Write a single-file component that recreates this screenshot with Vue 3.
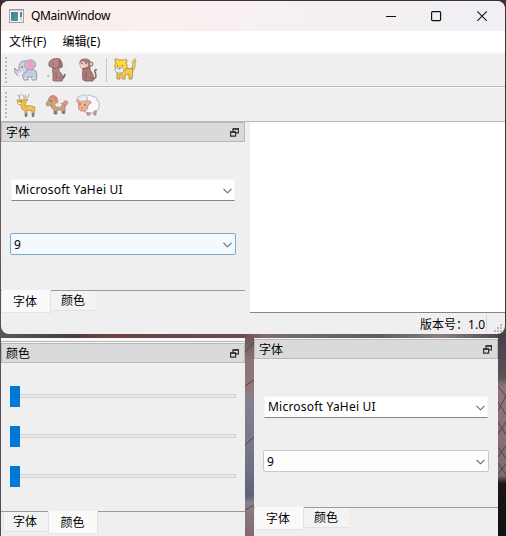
<script setup>
const grip = [0, 1, 2, 3, 4, 5, 6]
</script>

<template>
  <main class="desktop">
    <svg class="wallpaper" viewBox="0 0 506 536" aria-hidden="true">
      <defs>
        <linearGradient id="left" x1="0" y1="0" x2="0" y2="1">
          <stop offset="0" stop-color="#3a2a30" /><stop offset=".2" stop-color="#7b666c" />
          <stop offset=".55" stop-color="#60505a" /><stop offset="1" stop-color="#554650" />
        </linearGradient>
        <linearGradient id="strip" x1="0" x2="1" y1="0" y2="0">
          <stop offset="0" stop-color="#57555f" /><stop offset=".15" stop-color="#4d3c40" />
          <stop offset=".2" stop-color="#6b4141" /><stop offset=".48" stop-color="#70494a" />
          <stop offset=".52" stop-color="#7e6d72" /><stop offset=".75" stop-color="#5f5a62" />
          <stop offset=".87" stop-color="#8c7d82" /><stop offset="1" stop-color="#46434a" />
        </linearGradient>
        <linearGradient id="mid" x1="0" y1="0" x2="0" y2="1">
          <stop offset="0" stop-color="#6f5658" /><stop offset=".12" stop-color="#8d7478" />
          <stop offset=".27" stop-color="#92777b" /><stop offset=".29" stop-color="#85808f" />
          <stop offset=".55" stop-color="#77788a" /><stop offset=".8" stop-color="#606378" />
          <stop offset=".83" stop-color="#897f8a" /><stop offset="1" stop-color="#86686c" />
        </linearGradient>
        <linearGradient id="right" x1="0" y1="0" x2="0" y2="1">
          <stop offset="0" stop-color="#424047" /><stop offset=".22" stop-color="#5d5358" />
          <stop offset=".26" stop-color="#8e777b" /><stop offset=".7" stop-color="#806b70" />
          <stop offset=".74" stop-color="#1b171a" /><stop offset="1" stop-color="#100f11" />
        </linearGradient>
      </defs>
      <rect width="506" height="536" fill="#3a3438" />
      <rect width="2" height="536" fill="url(#left)" />
      <rect y="326" width="506" height="14" fill="url(#strip)" />
      <rect x="245" y="338" width="9" height="198" fill="url(#mid)" />
      <rect x="498" y="334" width="8" height="202" fill="url(#right)" />
      <path d="M245 352l9-10M245 386l9-6M245 445l9-8M245 510l9-5M498 386l8 10-8 15M498 402l8 13M498 434l8-12M498 422l8 13M498 457l8-11M498 447l8 12M498 474l8-10M498 463l8 12" fill="none" stroke="#443439" stroke-opacity=".75" />
    </svg>

    <section class="window">
      <header class="titlebar">
        <svg class="app-icon" width="15" height="14" viewBox="0 0 15 14">
          <defs><linearGradient id="appfill" x1="0" y1="0" x2="1" y2="1"><stop stop-color="#4a73a8" /><stop offset="1" stop-color="#4da883" /></linearGradient></defs>
          <rect x=".5" y=".5" width="14" height="13" fill="#f6f8f8" stroke="#9ba1a5" />
          <path d="M1 1.5h13" stroke="#c1c8cc" />
          <rect x="2" y="3" width="7" height="9" fill="url(#appfill)" />
          <path d="M11 3h2v5h-2z" fill="#617d89" /><path d="M11 8h2v4h-2z" fill="#d1d9dc" />
        </svg>
        <span class="caption">QMainWindow</span>
        <svg class="controls" width="102" height="12" viewBox="0 0 102 12" fill="none" stroke="#111">
          <path d="M0 6.5h10" /><rect x="45.6" y="1.6" width="9" height="9" rx="1" stroke-width="1.15" /><path d="M91.3 1.3l9.5 9.5M100.8 1.3l-9.5 9.5" stroke-width="1.1" />
        </svg>
      </header>

      <nav class="menubar"><span>文件(F)</span><span>编辑(E)</span></nav>

      <div class="toolbar">
        <span class="grip"><i v-for="n in grip" :key="n" /></span>
        <svg class="animal" viewBox="0 0 24 24">
          <g stroke="#9290a8" stroke-width=".9" stroke-linejoin="round">
            <path d="M9 12Q17 9 22 13Q24 17 22 22H18V19H14V22H10L8 16Z" fill="#c8cadd" />
            <path d="M12 3Q6 2 5 8Q6 12 3 13L1 10Q-1 14 3 17Q7 18 8 15Q13 16 14 10Z" fill="#cfd1e1" />
            <path d="M11 6Q12 1 18 2Q23 4 21 9Q18 13 13 11Q10 9 11 6Z" fill="#c8cadd" />
          </g>
          <path d="M13 6Q14 2 18 3Q21 5 20 9Q17 11 14 10Q12 8 13 6Z" fill="#f09dbe" />
          <path d="M4 16.5q4 0 5-3" fill="none" stroke="#fff" stroke-width="1.5" /><circle cx="8" cy="9" r=".8" fill="#57586e" /><path d="M10 20.5h3M18 20.5h3" stroke="#e7e7ef" />
        </svg>
        <svg class="animal" viewBox="0 0 24 24">
          <g stroke="#80656f" stroke-width=".9" stroke-linejoin="round">
            <path d="M15 20Q19 21 20 16" fill="none" stroke-width="1.8" />
            <path d="M8 9Q7 13 8 16V21Q7 23 10 23H17Q20 19 14 13V9Z" fill="#b7827b" />
            <path d="M6 2Q10-1 15 1Q17 4 17 8Q16 11 14 9Q11 12 6 9L4 8Q3 4 6 2Z" fill="#b9857e" />
            <path d="M14 2Q18 4 17 9Q15 11 14 8Z" fill="#a47172" /><path d="M11 14v7M14 20h3" fill="none" />
          </g>
          <circle cx="8" cy="6" r=".7" fill="#584850" /><circle cx="3.2" cy="18" r="1" fill="#77cf94" /><circle cx="21" cy="6" r="1" fill="#f2dda9" /><circle cx="19" cy="12" r=".9" fill="#d8dce9" />
        </svg>
        <svg class="animal" viewBox="0 0 24 24">
          <path d="M16 21Q22 21 19 14Q18 11 21 12" fill="none" stroke="#8c6666" stroke-width="1.6" />
          <g stroke="#80636c" stroke-width=".9">
            <path d="M7 10Q6 17 7 22L10 23H17Q19 18 14 12V9Z" fill="#ac7a74" />
            <path d="M4 6Q3 1 9 1Q15 1 15 7Q14 11 9 11Q4 11 4 6Z" fill="#ac7a74" />
            <circle cx="15" cy="6" r="2" fill="#f0c2b5" />
            <path d="M5 4Q8 2 9 5Q13 4 12 8Q9 11 5 9Q2 8 5 4Z" fill="#f0cbbd" stroke="none" />
            <path d="M10 14v7M14 20h3" fill="none" />
          </g><circle cx="6" cy="5.5" r=".7" fill="#4e4354" /><circle cx="10" cy="5.5" r=".7" fill="#4e4354" /><ellipse cx="6.3" cy="9" rx="1.3" ry=".8" fill="#fff" />
        </svg>
        <span class="separator" />
        <svg class="animal" viewBox="0 0 24 24">
          <path d="M18 12Q21 11 21 7Q20 3 23 2" fill="none" stroke="#a38b5a" stroke-width="3" />
          <path d="M18 12Q21 11 21 7Q20 3 23 2" fill="none" stroke="#f6d44e" stroke-width="1.7" />
          <g stroke="#ae8b51" stroke-width=".9" stroke-linejoin="round">
            <path d="M6 11Q13 9 20 11L19 21H16V16L12 17V21H9V17L7 16V21H4V14Z" fill="#f7cc43" />
            <path d="M2 3Q1 0 4 1L6 2H11Q14 0 14 3L13 5Q16 10 11 13H4Q0 9 3 5Z" fill="#ffda38" />
          </g><ellipse cx="6.5" cy="12" rx="4.5" ry="3" fill="#e6eaf3" stroke="#9293a4" stroke-width=".7" /><path d="M5 10h3l-1.5 1.5z" fill="#ae6774" /><path d="M4 7.5h1M9 7.5h1" stroke="#70563e" />
        </svg>
      </div>

      <div class="toolbar second">
        <span class="grip"><i v-for="n in grip" :key="n" /></span>
        <svg class="animal" viewBox="0 0 24 24">
          <path d="M6 7L5 3 3 2M5 4l2-3M10 7V3L8 2M10 5l4-1 1-3M12 4l-1-2" fill="none" stroke="#b3adad" stroke-width="1" />
          <g stroke="#a78a50" stroke-width=".7" stroke-linejoin="round"><path d="M3 7L6 7 10 7 14 6 12 9 11 13Q17 12 21 14L20 23H18V18L13 17V23H11V18L8 16 7 12 4 11Z" fill="#f0bf45" /></g>
          <path d="M12 20v4M19 20v4" stroke="#77738b" stroke-width="1.9" /><path d="M4 10.5h3" stroke="#fff0c6" /><circle cx="7" cy="8.5" r=".7" fill="#4e4656" /><path d="M13 15h5" stroke="#f6d580" />
        </svg>
        <svg class="animal" viewBox="0 0 24 24">
          <path d="M18 10Q20 6 23 9Q22 13 19 14" fill="#e69292" stroke="#b5767a" stroke-width=".7" />
          <g stroke="#a28778" stroke-width=".9" stroke-linejoin="round"><path d="M4 5Q8 2 12 5L13 11Q17 9 20 12V20H17V17L12 17V21H9V17L6 14 6 12 2 13Q0 10 3 8Z" fill="#c9a17a" /></g>
          <path d="M4 4Q8 0 12 4L13 8 10 7 9 5Z" fill="#dc8380" /><path d="M10 11q4-2 7 0l-2 3-4-1z" fill="#eef0f2" /><path d="M10.5 18v3M18.5 18v3" stroke="#79758e" stroke-width="2.2" /><circle cx="6" cy="8" r=".8" fill="#4e4656" />
        </svg>
        <svg class="animal" viewBox="0 0 24 24">
          <path d="M7 8Q6 4 10 4Q13 0 17 4Q21 3 21 7Q25 10 23 14Q23 18 19 19Q14 22 10 19Q6 19 6 14Z" fill="#f8f8fc" stroke="#b2afc0" stroke-width=".9" />
          <path d="M11 19v3h3v-3M18 18v4h2v-5" fill="#dda182" stroke="#9b8084" stroke-width=".8" />
          <path d="M3 7Q0 5 1 9L3 10Q1 18 6 18Q12 19 12 12L15 10Q15 7 11 8L8 6Z" fill="#f1b18b" stroke="#c08c79" stroke-width=".9" />
          <path d="M2 7Q1 3 5 3Q8 0 11 4Q13 7 9 8Q5 9 2 7Z" fill="#ededf4" stroke="#aaa8bb" stroke-width=".8" /><circle cx="4" cy="11" r=".8" fill="#564d5c" /><circle cx="9" cy="12" r=".8" fill="#564d5c" /><path d="M5 15h2" stroke="#b86a6a" />
        </svg>
      </div>

      <div class="workspace">
        <section class="dock font-dock">
          <header class="dock-title"><span>字体</span><svg width="9" height="9" viewBox="0 0 9 9"><path d="M3 .9h5.5v4H6M.6 4.1h5v4h-5zM3 1v3" fill="none" stroke="#303030" stroke-width="1.2" /><path d="M2.5 1h6.5M0 4h6" stroke="#303030" stroke-width="1.7" /></svg></header>
          <div class="font-form">
            <div class="combo family"><span>Microsoft YaHei UI</span><svg width="9" height="6" viewBox="0 0 9 6"><path d="M.5 .8l4 4 4-4" /></svg></div>
            <div class="combo size hot"><span>9</span><svg width="9" height="6" viewBox="0 0 9 6"><path d="M.5 .8l4 4 4-4" /></svg></div>
          </div>
          <div class="tabs"><span class="tab selected">字体</span><span class="tab">颜色</span></div>
        </section>
        <div class="canvas" />
      </div>

      <footer class="status"><span>版本号：1.0</span><i class="status-separator" /><svg width="9" height="9" viewBox="0 0 9 9"><path d="M6 0h2v2h-2zM3 3h2v2h-2zM6 3h2v2h-2zM0 6h2v2h-2zM3 6h2v2h-2zM6 6h2v2h-2z" fill="#b9b9b9" /></svg></footer>
    </section>

    <div class="previews">
      <section class="dock color-dock">
        <div class="toolbar-edge" />
        <header class="dock-title"><span>颜色</span><svg width="9" height="9" viewBox="0 0 9 9"><path d="M3 .9h5.5v4H6M.6 4.1h5v4h-5zM3 1v3" fill="none" stroke="#303030" stroke-width="1.2" /><path d="M2.5 1h6.5M0 4h6" stroke="#303030" stroke-width="1.7" /></svg></header>
        <div class="sliders"><div v-for="n in 3" :key="n" class="slider"><i /><b /></div></div>
        <div class="tabs color-tabs"><span class="tab">字体</span><span class="tab selected">颜色</span></div>
      </section>
      <section class="dock font-dock">
        <div class="top-edge" />
        <header class="dock-title"><span>字体</span><svg width="9" height="9" viewBox="0 0 9 9"><path d="M3 .9h5.5v4H6M.6 4.1h5v4h-5zM3 1v3" fill="none" stroke="#303030" stroke-width="1.2" /><path d="M2.5 1h6.5M0 4h6" stroke="#303030" stroke-width="1.7" /></svg></header>
        <div class="font-form">
          <div class="combo family"><span>Microsoft YaHei UI</span><svg width="9" height="6" viewBox="0 0 9 6"><path d="M.5 .8l4 4 4-4" /></svg></div>
          <div class="combo size"><span>9</span><svg width="9" height="6" viewBox="0 0 9 6"><path d="M.5 .8l4 4 4-4" /></svg></div>
        </div>
        <div class="tabs"><span class="tab selected">字体</span><span class="tab">颜色</span></div>
      </section>
    </div>
  </main>
</template>

<style>
body { overflow: hidden; }
</style>

<style scoped>
* { box-sizing: border-box; }
.desktop { position: relative; width: 506px; height: 536px; overflow: hidden; padding: 1px 1px 0; color: #000; font: 12px/16px "Noto Sans", "Noto Sans CJK SC", sans-serif; }
.wallpaper { position: absolute; inset: 0; width: 506px; height: 536px; }
.window { position: relative; display: flex; flex-direction: column; width: 504px; height: 333px; overflow: hidden; border-radius: 8px; background: #efefef; }
.titlebar { display: flex; align-items: center; height: 30px; flex: none; padding: 0 17px 0 8px; background: linear-gradient(90deg, #f9eeee, #f8f0f0 45%, #f1eff3 90%); }
.caption { margin-left: 7px; letter-spacing: -.36px; }
.controls { margin-left: auto; }
.menubar { display: flex; gap: 16px; height: 22px; flex: none; padding: 3px 8px 0; background: #fff; border-bottom: 1px solid #f3f3f3; }
.toolbar { display: flex; align-items: center; height: 34px; flex: none; padding-left: 4px; border-top: 1px solid #fafafa; border-bottom: 1px solid #b8b8b8; background: #efefef; }
.toolbar.second { height: 35px; }
.grip { display: grid; gap: 2px; width: 2px; margin-right: 7px; }
.grip i { width: 2px; height: 2px; background: #bdbdbd; }
.animal { width: 24px; height: 24px; margin-right: 7px; flex: none; }
.separator { width: 1px; height: 24px; margin: 0 6px 0 -1px; background: #c8c8c8; }
.workspace { display: flex; gap: 5px; height: 191px; flex: none; }
.canvas { flex: 1; background: #fff; border-bottom: 1px solid #858585; }
.dock { display: flex; flex-direction: column; width: 244px; flex: none; background: #efefef; }
.dock-title { display: flex; align-items: center; justify-content: space-between; height: 20px; flex: none; padding: 0 5px 0 4px; border: 1px solid #b9b9b9; background: #dadada; }
.dock-title span { padding-top: 1px; }
.font-form { display: flex; flex-direction: column; height: 148px; flex: none; padding: 37px 9px 0; gap: 32px; }
.combo { display: flex; align-items: center; justify-content: space-between; height: 22px; padding: 0 4px 0 3px; border: 1px solid #c9c9c9; border-radius: 2px; background: #fdfdfd; }
.combo svg path { fill: none; stroke: #666; stroke-width: 1.1; }
.combo.size span { padding-top: 1px; }
.combo.size svg { margin-right: -1px; margin-top: 1px; }
.combo.family { margin: 0 1px; padding: 0 2px 0 3px; border-color: #f6f6f6; border-bottom-color: #858585; border-radius: 0; background: #fff; }
.family svg { margin-top: 1px; }
.family span { letter-spacing: .22px; }
.combo.hot { border-color: #7eaacb; background: #f4f9fd; }
.tabs { display: flex; align-items: flex-start; padding-left: 1px; border-top: 1px solid #9b9b9b; }
.tab { display: flex; align-items: center; justify-content: center; width: 45px; height: 20px; padding-right: 1px; background: #f3f3f3; border: solid #e3e3e3; border-width: 0 0 1px; }
.tab.selected { width: 49px; height: 23px; margin-top: -1px; padding: 1px 2px 0 0; border-width: 0 1px 1px 0; background: #fafafa; }
.status { display: flex; align-items: center; justify-content: flex-end; flex: 1; padding-right: 2px; }
.status span { padding-top: 2px; }
.status-separator { width: 1px; height: 17px; margin: 0 7px 0 1px; background: #d5d5d5; }
.status svg { align-self: flex-end; margin-bottom: 1px; }
.previews { position: relative; display: flex; gap: 9px; height: 198px; margin-top: 4px; }
.toolbar-edge { height: 5px; flex: none; border-top: 3px solid #f8f8f8; border-bottom: 1px solid #f5f5f5; background: #b6b6b6; }
.top-edge { height: 1px; flex: none; background: #f8f8f8; }
.sliders { display: flex; flex-direction: column; gap: 19px; height: 148px; padding: 23px 9px 0; }
.slider { display: flex; align-items: flex-start; height: 21px; }
.slider i { width: 10px; height: 21px; background: #0078d7; }
.slider b { flex: 1; height: 4px; margin-top: 8px; border: 1px solid #d2d5d3; border-left: 0; background: #e7eae8; }
.color-tabs { padding-left: 2px; }
.color-tabs .tab { border-left: 1px solid #e3e3e3; padding-right: 2px; }
.color-tabs .tab.selected { width: 50px; border-right: 1px solid #e3e3e3; padding-right: 1px; }
</style>
